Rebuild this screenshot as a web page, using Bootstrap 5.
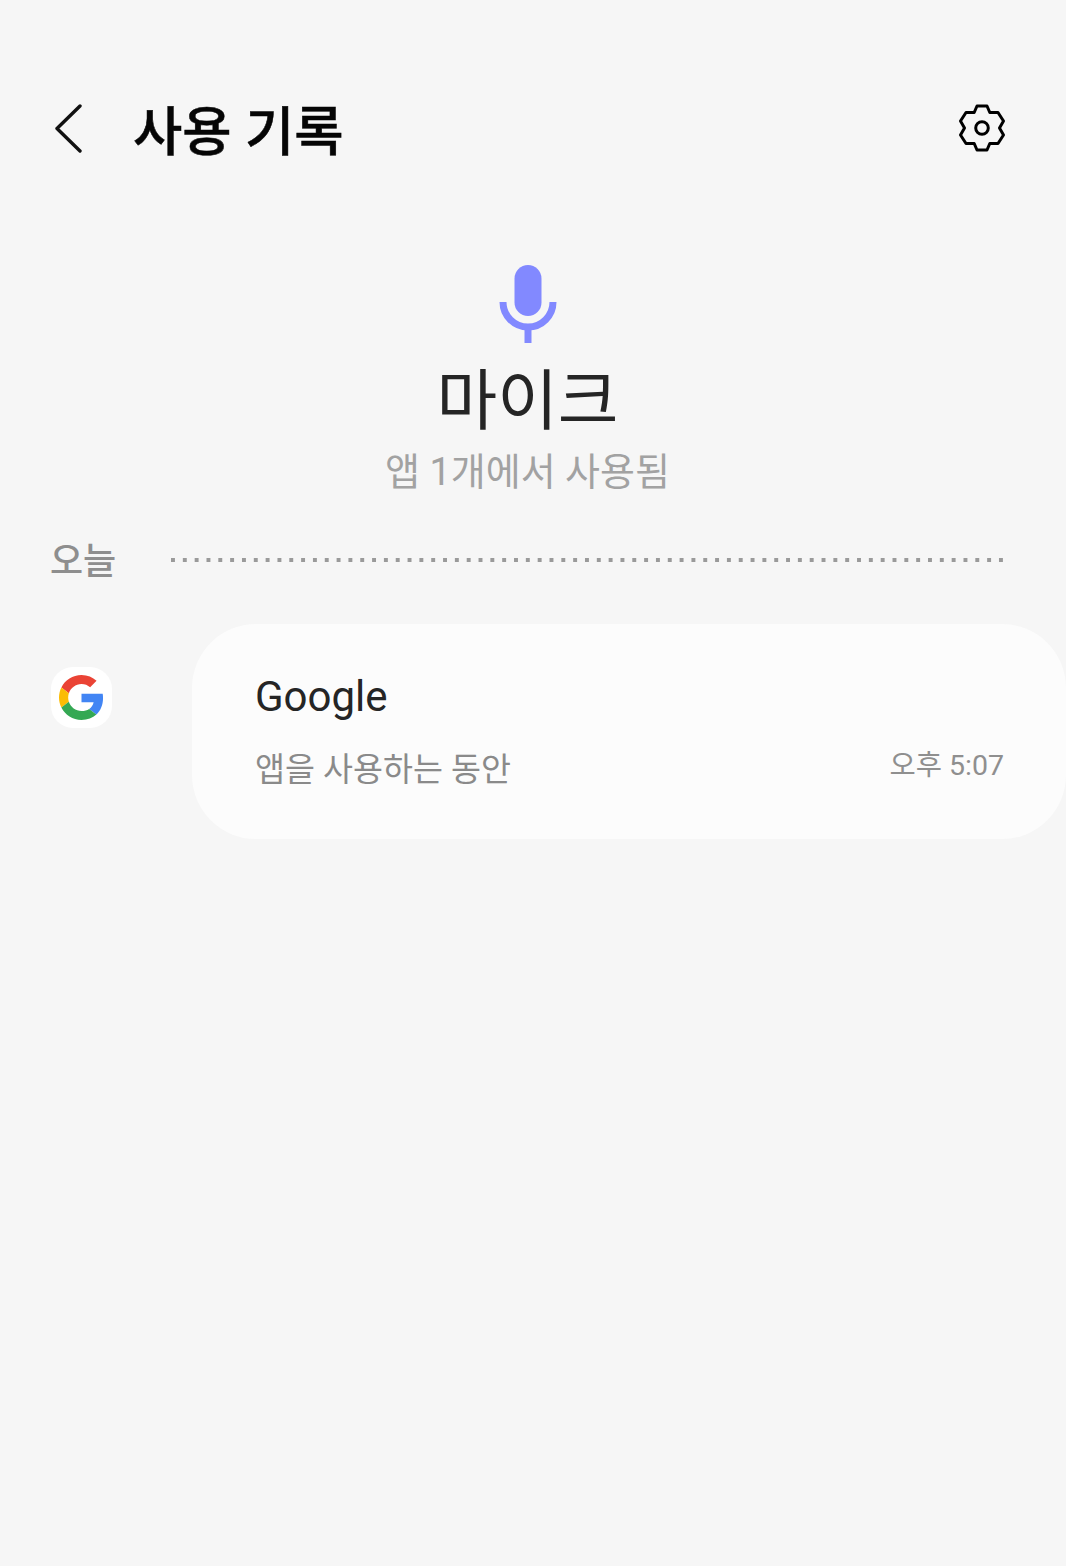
<!DOCTYPE html>
<html lang="ko">
<head>
  <meta charset="UTF-8">
  <meta name="viewport" content="width=device-width, initial-scale=1">
  <title>사용 기록</title>
  <link href="https://cdn.jsdelivr.net/npm/bootstrap@5.3.2/dist/css/bootstrap.min.css" rel="stylesheet">
  <style>
    body {
      background: #f6f6f6;
      font-family: Roboto, "Noto Sans CJK KR", sans-serif;
      min-height: 1566px;
    }
    .top-bar {
      height: 80px;
      margin-top: 88px;
      padding: 0 60px 0 54px;
    }
    .top-title {
      font-size: 53.6px;
      font-weight: 500;
      color: #050505;
      -webkit-text-stroke: 0.5px #050505;
      margin: 10px 0 0 49px;
      line-height: 80px;
    }
    .perm-head { margin-top: 97px; padding-right: 11px; }
    .perm-icon { display: block; height: 80px; }
    .perm-name {
      font-size: 66px;
      font-weight: 400;
      color: #252525;
      line-height: 80px;
      margin: 17px 0 0;
    }
    .perm-sub {
      font-size: 38px;
      color: #a2a2a2;
      line-height: 50px;
      margin-top: 5px;
    }
    .day-row { margin-top: 38px; padding: 0 63px 0 50px; height: 50px; }
    .day-label { font-size: 36px; font-weight: 500; color: #8e8e8e; width: 121px; line-height: 50px; margin-top: 4px; }
    .day-dots {
      flex: 1;
      height: 4px;
      background: linear-gradient(to right, #9a9a9a 4px, transparent 4px) left / 11.83px 4px repeat-x;
    }
    .app-row { margin-top: 39px; padding-left: 51px; }
    .app-tile {
      width: 61px;
      height: 61px;
      margin-top: 43px;
      margin-right: 80px;
      background: #fff;
      border-radius: 22px;
    }
    .app-panel {
      flex: 1;
      height: 215px;
      background: #fcfcfc;
      border-radius: 64px;
      padding: 45px 62px 0 63px;
    }
    .app-name { font-size: 42px; color: #252525; line-height: 56px; }
    .app-note { font-size: 32.6px; color: #8a8a8a; line-height: 46px; margin-top: 22px; }
    .app-time { font-size: 28.5px; color: #8f8f8f; line-height: 46px; margin-top: 18px; }
  </style>
</head>
<body>

<div class="top-bar d-flex align-items-center">
  <svg width="30" height="50" viewBox="0 0 30 50" fill="none" stroke="#111" stroke-width="3.4" stroke-linecap="round" stroke-linejoin="round">
    <path d="M26 3 L3 25.5 L26 48"/>
  </svg>
  <h1 class="top-title flex-grow-1">사용 기록</h1>
  <svg width="48" height="48" viewBox="0 0 48 48" fill="none" stroke="#000" stroke-width="3" stroke-linejoin="round">
    <path d="M19 2 H29 L31.8 8.5 H40 L45.5 17 L41.5 24 L45.5 31 L40 39.5 H31.8 L29 46 H19 L16.2 39.5 H8 L2.5 31 L6.5 24 L2.5 17 L8 8.5 H16.2 Z"/>
    <circle cx="24" cy="24" r="6.3"/>
  </svg>
</div>

<div class="perm-head text-center">
  <svg class="perm-icon mx-auto" width="58" height="80" viewBox="0 0 58 80" fill="none">
    <rect x="15.5" y="0" width="27" height="51" rx="13.5" fill="#8289ff"/>
    <path d="M4 37 A25 25 0 0 0 54 37" stroke="#8289ff" stroke-width="7"/>
    <rect x="25.5" y="60" width="7" height="18" fill="#8289ff"/>
  </svg>
  <h2 class="perm-name">마이크</h2>
  <div class="perm-sub">앱 1개에서 사용됨</div>
</div>

<div class="day-row d-flex align-items-center">
  <div class="day-label">오늘</div>
  <div class="day-dots"></div>
</div>

<div class="app-row d-flex align-items-start">
  <div class="app-tile d-flex align-items-center justify-content-center">
    <svg width="45" height="45" viewBox="0 0 48 48">
      <path fill="#EA4335" d="M24 9.5c3.54 0 6.71 1.22 9.21 3.6l6.85-6.85C35.9 2.38 30.47 0 24 0 14.62 0 6.51 5.38 2.56 13.22l7.98 6.19C12.43 13.72 17.74 9.5 24 9.5z"/>
      <path fill="#4285F4" d="M46.98 24.55c0-1.57-.15-3.09-.38-4.55H24v9.02h12.94c-.58 2.96-2.26 5.48-4.78 7.18l7.73 6c4.51-4.18 7.09-10.36 7.09-17.65z"/>
      <path fill="#FBBC05" d="M10.53 28.59c-.48-1.45-.76-2.99-.76-4.59s.27-3.14.76-4.59l-7.98-6.19C.92 16.46 0 20.12 0 24c0 3.88.92 7.54 2.56 10.78l7.97-6.19z"/>
      <path fill="#34A853" d="M24 48c6.48 0 11.93-2.13 15.89-5.81l-7.73-6c-2.15 1.45-4.92 2.3-8.16 2.3-6.26 0-11.57-4.22-13.47-9.91l-7.98 6.19C6.51 42.62 14.62 48 24 48z"/>
    </svg>
  </div>
  <div class="app-panel">
    <div class="app-name">Google</div>
    <div class="d-flex justify-content-between">
      <div class="app-note">앱을 사용하는 동안</div>
      <div class="app-time">오후 5:07</div>
    </div>
  </div>
</div>

<script src="https://cdn.jsdelivr.net/npm/bootstrap@5.3.2/dist/js/bootstrap.bundle.min.js"></script>
</body>
</html>
